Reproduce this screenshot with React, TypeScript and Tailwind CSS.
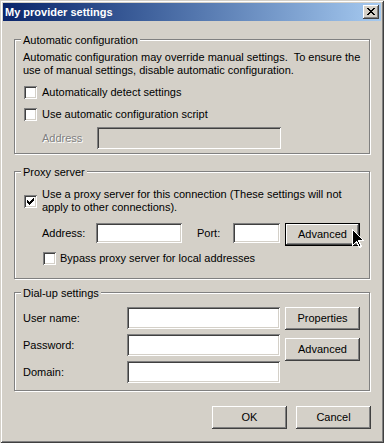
import React from "react";

const raised =
  "shadow-[inset_-1px_-1px_0_#404040,inset_1px_1px_0_#ffffff,inset_-2px_-2px_0_#808080,inset_2px_2px_0_#d4d0c8]";
const sunken =
  "shadow-[inset_1px_1px_0_#808080,inset_-1px_-1px_0_#ffffff,inset_2px_2px_0_#404040,inset_-2px_-2px_0_#d4d0c8]";

function Checkbox({ checked = false }: { checked?: boolean }) {
  return (
    <div className={`relative w-[13px] h-[13px] shrink-0 bg-white ${sunken}`}>
      {checked && (
        <svg
          className="absolute left-[3px] top-[3px]"
          width="7"
          height="7"
          viewBox="0 0 7 7"
          shapeRendering="crispEdges"
        >
          <path
            d="M6 0h1v3h-1v1h-1v1h-1v1h-1v1h-1v-1h-1v-1h-1v-3h1v1h1v1h1v-1h1v-1h1z"
            fill="#000"
          />
        </svg>
      )}
    </div>
  );
}

function Button({
  label,
  isDefault = false,
  className = "",
}: {
  label: string;
  isDefault?: boolean;
  className?: string;
}) {
  if (isDefault) {
    return (
      <div
        className={`w-[75px] h-[23px] shrink-0 border border-black flex items-center justify-center bg-[#d4d0c8] shadow-[inset_-1px_-1px_0_#404040,inset_1px_1px_0_#ffffff,inset_-2px_-2px_0_#808080] ${className}`}
      >
        {label}
      </div>
    );
  }
  return (
    <div
      className={`w-[75px] h-[23px] shrink-0 flex items-center justify-center bg-[#d4d0c8] ${raised} ${className}`}
    >
      {label}
    </div>
  );
}

function Group({
  title,
  className,
  children,
}: {
  title: string;
  className: string;
  children: React.ReactNode;
}) {
  return (
    <div
      className={`relative w-[356px] border border-[#808080] shadow-[1px_1px_0_#ffffff,inset_1px_1px_0_#ffffff] ${className}`}
    >
      <div className="absolute left-[6px] top-[-6px] px-[2px] bg-[#d4d0c8] leading-[13px]">
        {title}
      </div>
      {children}
    </div>
  );
}

export default function App() {
  return (
    <div className="w-[384px] h-[443px] bg-[#d4d0c8] p-[3px] relative overflow-hidden font-['Liberation_Sans',Arial,sans-serif] text-[11px] leading-[13px] text-black shadow-[inset_1px_1px_0_#d4d0c8,inset_-1px_-1px_0_#404040,inset_2px_2px_0_#ffffff,inset_-2px_-2px_0_#808080]">
      {/* Title bar */}
      <div className="h-[18px] flex items-center justify-between pl-[2px] pr-[2px] bg-linear-to-r from-[#0a246a] to-[#a6caf0]">
        <span className="text-white font-bold text-[11px] leading-[13px]">
          My provider settings
        </span>
        <div
          className={`w-[16px] h-[14px] flex items-center justify-center bg-[#d4d0c8] ${raised}`}
        >
          <svg width="8" height="7" viewBox="0 0 8 7" shapeRendering="crispEdges" className="mt-[-1px]">
            <path
              d="M0 0h2v1h1v1h2v-1h1v-1h2v1h-1v1h-1v1h-1v1h1v1h1v1h1v1h-2v-1h-1v-1h-2v1h-1v1h-2v-1h1v-1h1v-1h1v-1h-1v-1h-1v-1h-1z"
              fill="#000"
            />
          </svg>
        </div>
      </div>

      {/* Body */}
      <div className="flex flex-col pl-[11px] pt-[18px]">
        {/* Automatic configuration */}
        <Group title="Automatic configuration" className="h-[115px]">
          <div className="pt-[11px] pl-[8px]">
            Automatic configuration may override manual settings.&nbsp; To ensure the
            <br />
            use of manual settings, disable automatic configuration.
          </div>
          <div className="mt-[9px] pl-[9px] flex items-center gap-[5px]">
            <Checkbox />
            <span>Automatically detect settings</span>
          </div>
          <div className="mt-[9px] pl-[9px] flex items-center gap-[5px]">
            <Checkbox />
            <span>Use automatic configuration script</span>
          </div>
          <div className="mt-[6px] pl-[27px] flex items-center">
            <span className="w-[55px] text-[#808080] [text-shadow:1px_1px_0_#ffffff]">
              Address
            </span>
            <div className={`w-[184px] h-[22px] bg-[#d4d0c8] ${sunken}`} />
          </div>
        </Group>

        {/* Proxy server */}
        <Group title="Proxy server" className="mt-[17px] h-[108px]">
          <div className="mt-[16px] pl-[9px] flex items-center gap-[5px]">
            <Checkbox checked />
            <span>
              Use a proxy server for this connection (These settings will not
              <br />
              apply to other connections).
            </span>
          </div>
          <div className="mt-[9px] pl-[27px] flex items-start">
            <span className="w-[54px] leading-[20px]">Address:</span>
            <div className={`w-[86px] h-[20px] bg-white ${sunken}`} />
            <span className="ml-[15px] w-[36px] leading-[20px]">Port:</span>
            <div className={`w-[47px] h-[20px] bg-white ${sunken}`} />
            <Button label="Advanced" isDefault className="ml-[5px]" />
          </div>
          <div className="mt-[6px] pl-[28px] flex items-center gap-[4px]">
            <Checkbox />
            <span>Bypass proxy server for local addresses</span>
          </div>
        </Group>

        {/* Dial-up settings */}
        <Group title="Dial-up settings" className="mt-[13px] h-[99px]">
          <div className="pt-[14px] pl-[8px] flex items-start">
            <div className="flex flex-col gap-[5px]">
              <div className="flex items-center h-[22px]">
                <span className="w-[104px]">User name:</span>
                <div className={`w-[153px] h-[22px] bg-white ${sunken}`} />
              </div>
              <div className="flex items-center h-[22px]">
                <span className="w-[104px]">Password:</span>
                <div className={`w-[153px] h-[22px] bg-white ${sunken}`} />
              </div>
              <div className="flex items-center h-[22px]">
                <span className="w-[104px]">Domain:</span>
                <div className={`w-[153px] h-[22px] bg-white ${sunken}`} />
              </div>
            </div>
            <div className="ml-[5px] flex flex-col gap-[8px]">
              <Button label="Properties" />
              <Button label="Advanced" />
            </div>
          </div>
        </Group>

        {/* OK / Cancel */}
        <div className="mt-[15px] pl-[198px] flex gap-[9px]">
          <Button label="OK" />
          <Button label="Cancel" />
        </div>
      </div>

      {/* Mouse cursor */}
      <svg
        className="absolute left-[352px] top-[229px]"
        width="13"
        height="20"
        viewBox="0 0 13 20"
        shapeRendering="crispEdges"
      >
        <path
          d="M0.5 0.5 L0.5 16.5 L4.5 12.5 L7.5 18.5 L9.5 17.5 L6.5 11.5 L11.5 11.5 Z"
          fill="#000000"
          stroke="#ffffff"
          strokeWidth="1"
        />
      </svg>
    </div>
  );
}
